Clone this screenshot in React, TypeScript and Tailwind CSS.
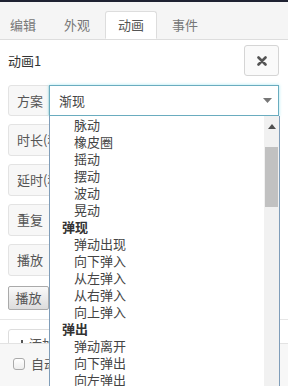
const font = { fontFamily: '"Noto Sans CJK SC", "Noto Sans", sans-serif' };

const tabs = ['编辑', '外观', '动画', '事件'];

const options: { label: string; group?: boolean }[] = [
  { label: '脉动' },
  { label: '橡皮圈' },
  { label: '摇动' },
  { label: '摆动' },
  { label: '波动' },
  { label: '晃动' },
  { label: '弹现', group: true },
  { label: '弹动出现' },
  { label: '向下弹入' },
  { label: '从左弹入' },
  { label: '从右弹入' },
  { label: '向上弹入' },
  { label: '弹出', group: true },
  { label: '弹动离开' },
  { label: '向下弹出' },
  { label: '向左弹出' },
];

function FieldRow({ label }: { label: string }) {
  return (
    <div className="flex h-[32px] mb-[8px]">
      <div className="flex items-center w-[80px] px-[8px] bg-[#f7f7f7] border border-[#e3e3e3] rounded-l-[3px] text-[13px] text-[#555] whitespace-nowrap">
        {label}
      </div>
      <div className="flex-1 border border-l-0 border-[#ddd] bg-white" />
    </div>
  );
}

export default function App() {
  return (
    <div className="relative w-[288px] h-[386px] overflow-hidden bg-white text-[#444]" style={font}>
      <div className="h-[2px] bg-[#1f2232]" />

      {/* tabs */}
      <div className="flex items-end h-[38px] bg-[#f5f5f5] border-b border-[#ddd]">
        <div className="flex ml-[-3px] gap-[2px]">
          {tabs.map((t) => (
            <div
              key={t}
              className={
                t === '动画'
                  ? 'h-[28px] px-[12px] flex items-center text-[13px] text-[#555] bg-white border border-[#ddd] border-b-white rounded-t-[3px] -mb-px'
                  : 'h-[28px] px-[12px] flex items-center text-[13px] text-[#777] border border-transparent'
              }
            >
              {t}
            </div>
          ))}
        </div>
      </div>

      {/* header */}
      <div className="flex items-center justify-between pl-[8px] pr-[9px] pt-[5px]">
        <span className="text-[13px] text-[#333]">动画1</span>
        <button className="w-[35px] h-[31px] flex items-center justify-center bg-[#fafafa] border border-[#d5d5d5] rounded-[3px]">
          <svg width="10" height="10" viewBox="0 0 10 10">
            <path d="M1.5 1.5 L8.5 8.5 M8.5 1.5 L1.5 8.5" stroke="#555" strokeWidth="2.6" strokeLinecap="round" />
          </svg>
        </button>
      </div>

      {/* form */}
      <div className="pl-[8px] pr-[9px] pt-[9px]">
        <div className="flex h-[31px] mb-[8px]">
          <div className="flex items-center w-[41px] pl-[8px] bg-[#f7f7f7] border border-[#e3e3e3] rounded-l-[3px] text-[13px] text-[#555] whitespace-nowrap overflow-hidden">
            方案
          </div>
          <div className="flex-1 flex items-center justify-between pl-[9px] pr-[6px] border border-[#6aacbf] bg-white shadow-[0_0_3px_rgba(102,215,233,0.6)]">
            <span className="text-[13px] text-[#444]">渐现</span>
            <svg width="9" height="5" viewBox="0 0 9 5">
              <path d="M0 0 H9 L4.5 5 Z" fill="#777" />
            </svg>
          </div>
        </div>
        <FieldRow label="时长(秒)" />
        <FieldRow label="延时(秒)" />
        <FieldRow label="重复" />
        <FieldRow label="播放" />
        <button className="h-[24px] w-[41px] text-[13px] text-[#555] border border-[#aaa] rounded-[2px] bg-gradient-to-b from-[#fafafa] to-[#dcdcdc]">
          播放
        </button>
      </div>

      <div className="mt-[9px] border-t border-[#e6e6e6]" />

      <div className="pl-[8px] pt-[9px]">
        <div className="flex items-center gap-[2px] w-[90px] h-[30px] px-[8px] border border-[#ddd] rounded-[3px] text-[13px] text-[#555]">
          <svg width="10" height="10" viewBox="0 0 10 10">
            <path d="M5 1 V9 M1 5 H9" stroke="#555" strokeWidth="2" />
          </svg>
          添加动画
        </div>
      </div>

      {/* footer */}
      <div className="absolute left-0 right-0 top-[343px] bottom-0 bg-[#f7f7f7] border-t border-[#e3e3e3] flex items-start pt-[13px] pl-[13px] gap-[6px]">
        <span className="mt-[1px] w-[12px] h-[12px] rounded-[3px] border border-[#aaa] bg-gradient-to-b from-white to-[#eee]" />
        <span className="text-[13px] text-[#555] leading-[14px]">自动播放</span>
      </div>

      {/* open select list */}
      <div className="absolute left-[49px] top-[116px] w-[231px] bottom-0 bg-white border-x border-[#7f9db9] flex">
        <div className="flex-1">
          {options.map((o) => (
            <div
              key={o.label}
              className={
                o.group
                  ? 'h-[17px] leading-[17px] pl-[12px] text-[13px] font-bold text-[#333]'
                  : 'h-[17px] leading-[17px] pl-[24px] text-[13px] text-[#444]'
              }
            >
              {o.label}
            </div>
          ))}
        </div>
        <div className="w-[15px] bg-[#f1f1f1] flex flex-col items-center">
          <div className="h-[31px] w-full flex items-start justify-center pt-[8px]">
            <svg width="8" height="5" viewBox="0 0 8 5">
              <path d="M0 5 H8 L4 0 Z" fill="#505050" />
            </svg>
          </div>
          <div className="w-[13px] h-[60px] bg-[#c1c1c1]" />
        </div>
      </div>
    </div>
  );
}
